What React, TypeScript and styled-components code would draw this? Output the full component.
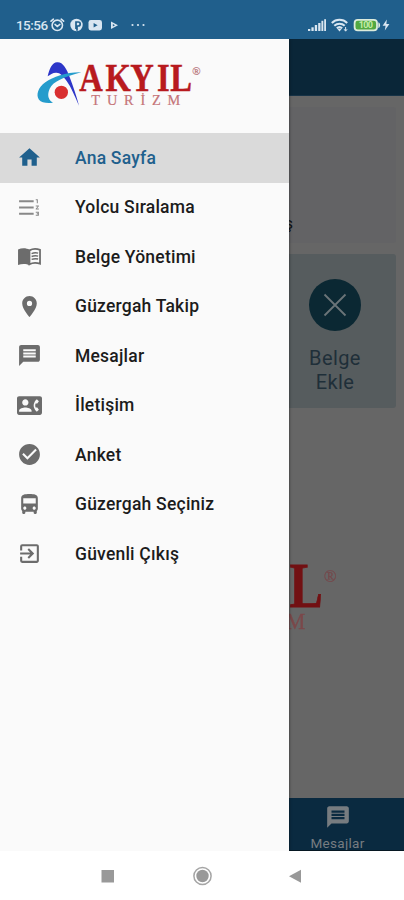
import React from "react";
import styled, { createGlobalStyle } from "styled-components";
import {
  MdHome,
  MdFormatListNumberedRtl,
  MdPlace,
  MdMessage,
  MdContactPhone,
  MdCheckCircle,
  MdDirectionsBus,
  MdExitToApp,
} from "react-icons/md";

const GlobalStyle = createGlobalStyle`
  * { box-sizing: border-box; }
  body { margin: 0; background: #fff; font-family: Roboto, "Noto Sans", sans-serif; }
`;

const Phone = styled.div`
  width: 404px;
  height: 900px;
  display: flex;
  flex-direction: column;
  overflow: hidden;
  background: #fff;
`;

const StatusBar = styled.header`
  flex: none;
  height: 39px;
  padding: 10px 14px 0 16px;
  display: flex;
  justify-content: space-between;
  background: #205f8c;
  color: #d9e6f1;
`;

const StatusGroup = styled.div`
  height: 29px;
  display: flex;
  align-items: center;
`;

const Clock = styled.span`
  width: 32px;
  font-size: 13.5px;
  font-weight: 500;
  letter-spacing: -0.55px;
  white-space: nowrap;
`;

const Screen = styled.main`
  position: relative;
  flex: none;
  height: 812px;
  background: #666;
  overflow: hidden;
`;

const Page = styled.div`
  height: 100%;
  display: flex;
  flex-direction: column;
`;

const AppBar = styled.div`
  flex: none;
  height: 57px;
  background: #0a2638;
  border-bottom: 1px solid #173347;
`;

const Cards = styled.section`
  display: flex;
  flex-direction: column;
  gap: 11px;
  padding: 11px 8px 0;
`;

const InfoCard = styled.div`
  height: 136px;
  padding: 106px 103px 0 0;
  border-radius: 3px;
  background: #636365;
  color: #101214;
  font-size: 17px;
  line-height: 20px;
  text-align: right;
`;

const ActionCard = styled.div`
  height: 154px;
  padding: 25px 0 0 266px;
  border-radius: 3px;
  background: #565c5e;
`;

const Action = styled.div`
  width: 122px;
  display: flex;
  flex-direction: column;
  align-items: center;
  color: #1f2f39;
  font-size: 20px;
  line-height: 24px;
  letter-spacing: 0.4px;
  text-align: center;
`;

const RoundIcon = styled.span`
  width: 52px;
  height: 52px;
  margin-bottom: 15px;
  border-radius: 50%;
  background: #0b2833;
`;

const Watermark = styled.div`
  flex: 1;
  padding: 150px 0 0 84px;
  filter: brightness(0.62);
`;

const TabBar = styled.nav`
  flex: none;
  height: 53px;
  padding: 6px 0 0 270px;
  background: #0a2a40;
  border-bottom: 1px solid #061722;
  overflow: hidden;
`;

const Tab = styled.div`
  width: 135px;
  display: flex;
  flex-direction: column;
  align-items: center;
  gap: 4px;
  color: #777c80;
  font-size: 13.5px;
  line-height: 18px;
  letter-spacing: 0.3px;
  svg { display: block; }
`;

const Drawer = styled.aside`
  position: absolute;
  top: 0;
  left: 0;
  width: 289px;
  height: 100%;
  background: #fafafa;
  box-shadow: 0 0 3px rgba(0, 0, 0, 0.55);
`;

const Brand = styled.div`
  height: 94px;
  padding: 21px 0 0 36px;
`;

const Menu = styled.ul`
  margin: 0;
  padding: 0;
  list-style: none;
`;

const MenuItem = styled.li<{ $active?: boolean }>`
  height: 49.5px;
  padding-left: 17px;
  display: flex;
  align-items: center;
  gap: 33px;
  background: ${(p) => (p.$active ? "#dadada" : "transparent")};
  color: ${(p) => (p.$active ? "#1f608d" : "#1c1c1c")};
  font-size: 17.5px;
  font-weight: 500;
  letter-spacing: 0.22px;
  white-space: nowrap;
  svg { flex: none; color: ${(p) => (p.$active ? "#1f608d" : "#6c6c6c")}; }
`;

const ListIcon = styled(MdFormatListNumberedRtl)`
  opacity: 0.8;
`;

const SystemNav = styled.footer`
  flex: 1;
  display: grid;
  grid-template-columns: 14px 20px 14px;
  justify-content: center;
  column-gap: 77px;
  align-items: center;
  background: #fff;
`;

const Logo = ({ width, height }: { width: number; height: number }) => (
  <svg width={width} height={height} viewBox="48 30 501 144" preserveAspectRatio="none" display="block" overflow="visible">
    <path
      d="M83 79C89 52 99 36 112 37C128 36 139 54 150 84C160 111 170 140 177 167C165 140 153 111 140 93C129 77 119 67 108 68C98 68 90 74 83 79Z"
      fill="#2d36c8"
    />
    <path
      d="M184 67C140 66 100 80 76 97C54 113 47 135 57 149C64 158 80 160 99 158C84 149 81 134 89 116C100 94 132 81 184 67Z"
      fill="#259ccc"
    />
    <circle cx="124" cy="127" r="20" fill="#d92f30" />
    <g fontFamily="Liberation Serif, serif">
      <text
        transform="scale(0.8 1)"
        x="222 321 413 514 563"
        y="122"
        fontSize="122"
        fontWeight="700"
        fill="#b81a1e"
        stroke="#b81a1e"
        strokeWidth="1.5"
      >
        AKYIL
      </text>
      <text x="214" y="165" fontSize="43" fill="#c57478" stroke="#c57478" strokeWidth="0.6" textLength="267" lengthAdjust="spacing">
        TURİZM
      </text>
      <text x="517" y="76" fontSize="33" fill="#b9777c" stroke="#b9777c" strokeWidth="0.6">
        ®
      </text>
    </g>
  </svg>
);

const BookIcon = ({ size = 25 }: { size?: number }) => (
  <svg width={size} height={size} viewBox="0 0 24 24" fill="none">
    <path d="M1 5.2C4.5 3.7 9 3.7 12 5.6V20.4C9 18.7 4.5 18.7 1 20.2Z" fill="currentColor" />
    <path
      d="M12 6.1C14.8 4.6 19 4.4 22.1 5.7V18.9C19 17.9 14.8 17.9 12 19.5Z"
      stroke="currentColor"
      strokeWidth="1.7"
    />
    <path
      d="M14 9.2c2-.8 4.3-.9 6.3-.4M14 12c2-.8 4.3-.9 6.3-.4M14 14.8c2-.8 4.3-.9 6.3-.4"
      stroke="currentColor"
      strokeWidth="1.4"
    />
  </svg>
);

const NotificationIcons = () => (
  <svg width="100" height="20" viewBox="0 0 100 20" fill="none">
    <g stroke="currentColor" strokeWidth="1.6" strokeLinecap="round">
      <circle cx="9.3" cy="10.3" r="5.2" />
      <path d="M3 6.2l2.4-2M15.6 6.2l-2.4-2M7 9.4l2.3 2 2.6-2" />
    </g>
    <circle cx="28.5" cy="10" r="6.2" fill="currentColor" />
    <path d="M28 14V7h2.2a1.8 1.8 0 010 4H29v4.8" stroke="#205f8c" strokeWidth="1.7" />
    <rect x="40.5" y="5" width="13.5" height="10.4" rx="2.4" fill="currentColor" />
    <path d="M45.6 7.9v4.6l4-2.3z" fill="#205f8c" />
    <path d="M63 6.5v7.6l7-3.8z" fill="currentColor" />
    <path d="M64.8 9v2.4l2.2-1.2z" fill="#205f8c" />
    <g fill="currentColor">
      <circle cx="84.5" cy="10" r="1.1" />
      <circle cx="90" cy="10" r="1.1" />
      <circle cx="95.5" cy="10" r="1.1" />
    </g>
  </svg>
);

const SystemIcons = () => (
  <svg width="84" height="20" viewBox="0 0 84 20" fill="none">
    <g fill="currentColor">
      <rect x="2" y="14" width="2.3" height="2" />
      <rect x="5.4" y="12.3" width="2.3" height="3.7" />
      <rect x="8.8" y="10" width="2.3" height="6" />
      <rect x="12.2" y="8" width="2.3" height="8" />
      <rect x="15.4" y="5.8" width="1.9" height="10.2" />
      <rect x="18.2" y="4.2" width="1.8" height="11.8" />
    </g>
    <g stroke="currentColor" strokeWidth="2">
      <path d="M25.8 8a11 11 0 0115.4 0" />
      <path d="M28.3 10.8a7.4 7.4 0 0110.4 0" />
      <path d="M30.8 13.3a4 4 0 015.4 0" />
    </g>
    <path d="M31 13.6h5l-2.5 2.8z" fill="currentColor" />
    <path d="M39.6 12v4M38.1 14.2l1.5 2 1.5-2" stroke="currentColor" />
    <rect x="48.6" y="4.8" width="22.4" height="10.6" rx="3.2" fill="#52a842" stroke="#dcebdc" strokeWidth="1.8" />
    <path d="M72.3 7.2c2.4.6 2.4 5.2 0 5.8z" fill="#dcebdc" />
    <text x="52.8" y="13.3" fontSize="9" fontWeight="700" fontFamily="Roboto, sans-serif" fill="#c4eda6" textLength="14">100</text>
    <path d="M80.8 4.5l-4.2 6.2h3l-.8 4.8 4.6-6.4h-3z" fill="currentColor" />
  </svg>
);

const items = [
  { label: "Ana Sayfa", Icon: MdHome, active: true },
  { label: "Yolcu Sıralama", Icon: ListIcon },
  { label: "Belge Yönetimi", Icon: BookIcon },
  { label: "Güzergah Takip", Icon: MdPlace },
  { label: "Mesajlar", Icon: MdMessage },
  { label: "İletişim", Icon: MdContactPhone },
  { label: "Anket", Icon: MdCheckCircle },
  { label: "Güzergah Seçiniz", Icon: MdDirectionsBus },
  { label: "Güvenli Çıkış", Icon: MdExitToApp },
];

export default function App() {
  return (
    <Phone>
      <GlobalStyle />
      <StatusBar>
        <StatusGroup>
          <Clock>15:56</Clock>
          <NotificationIcons />
        </StatusGroup>
        <StatusGroup>
          <SystemIcons />
        </StatusGroup>
      </StatusBar>
      <Screen>
        <Page>
          <AppBar />
          <Cards>
            <InfoCard>ş</InfoCard>
            <ActionCard>
              <Action>
                <RoundIcon>
                  <svg width="52" height="52" viewBox="0 0 52 52" stroke="#6b7478" strokeWidth="1.8">
                    <path d="M15.5 15.5l21 21M36.5 15.5l-21 21" />
                  </svg>
                </RoundIcon>
                Belge
                <br />
                Ekle
              </Action>
            </ActionCard>
          </Cards>
          <Watermark>
            <Logo width={256} height={76} />
          </Watermark>
          <TabBar>
            <Tab>
              <MdMessage size={26} />
              Mesajlar
            </Tab>
          </TabBar>
        </Page>
        <Drawer>
          <Brand>
            <Logo width={167} height={48} />
          </Brand>
          <Menu>
            {items.map(({ label, Icon, active }) => (
              <MenuItem key={label} $active={active}>
                <Icon size={25} />
                {label}
              </MenuItem>
            ))}
          </Menu>
        </Drawer>
      </Screen>
      <SystemNav>
        <svg width="14" height="14">
          <rect x="0.5" y="1" width="12.5" height="12.5" fill="#999" />
        </svg>
        <svg width="20" height="20" fill="none">
          <circle cx="10.5" cy="10" r="8.6" stroke="#a5a5a5" strokeWidth="1.5" />
          <circle cx="10.5" cy="10" r="6.2" fill="#999" />
        </svg>
        <svg width="14" height="14">
          <path d="M12 .8v13L0 7.3z" fill="#999" />
        </svg>
      </SystemNav>
    </Phone>
  );
}
